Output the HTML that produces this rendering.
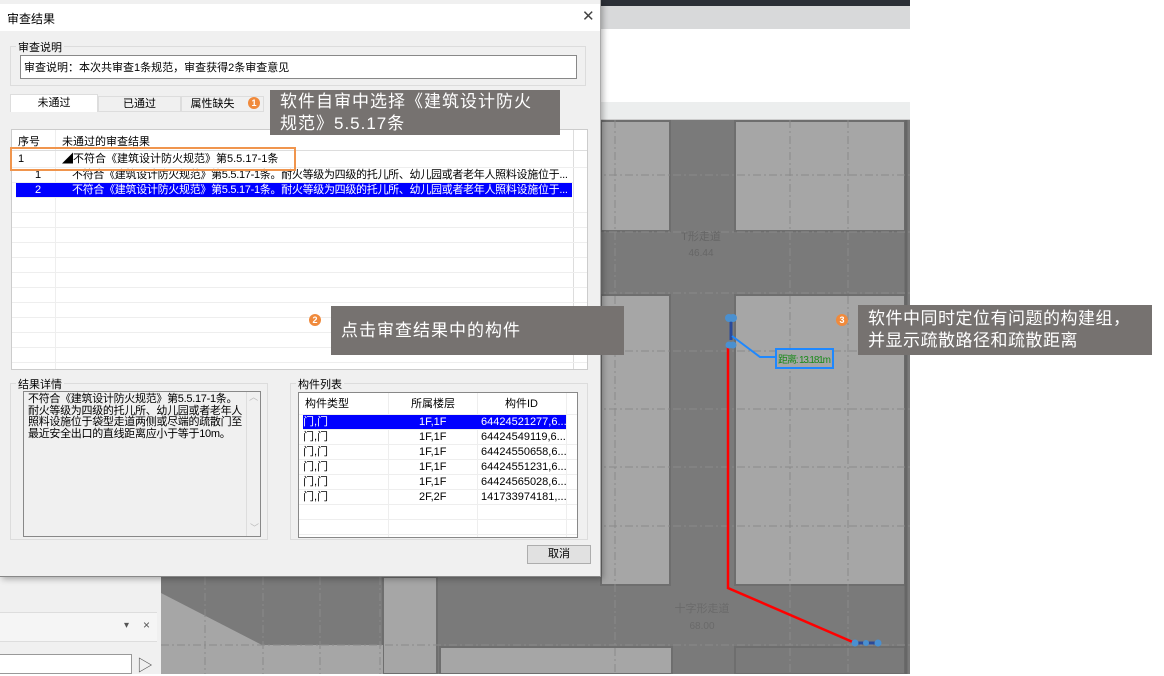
<!DOCTYPE html>
<html><head><meta charset="utf-8"><style>
*{margin:0;padding:0;box-sizing:border-box}
body{width:1164px;height:674px;position:relative;overflow:hidden;background:#fff;font-family:"Liberation Sans","Noto Sans CJK SC",sans-serif;font-size:11px;color:#000}
.a{position:absolute}
.ann{position:absolute;background:#767270;color:#fff;font-size:17px;line-height:22px;letter-spacing:1px;white-space:nowrap}
.dot{position:absolute;width:12px;height:12px;border-radius:50%;background:#f08a3c;color:#fff;font-size:9px;line-height:12px;text-align:center;font-weight:bold}
.row{position:absolute;left:0;right:0;height:15px;border-bottom:1px solid #eee;line-height:15px;white-space:nowrap}
</style></head><body>
<div class="a" style="left:0;top:0;width:910px;height:6px;background:#2b2f36"></div>
<div class="a" style="left:601px;top:6px;width:309px;height:23px;background:#d8d9da"></div>
<div class="a" style="left:601px;top:29px;width:309px;height:73px;background:#fff"></div>
<div class="a" style="left:601px;top:102px;width:309px;height:18px;background:#eceeee;border-bottom:1px solid #ccc"></div>
<svg class="a" style="left:0;top:0" width="1164" height="674">
<rect x="161" y="120" width="749" height="554" fill="#7a7a7a"/>
<g fill="#a6a6a6" stroke="#6e6e6e" stroke-width="2">
<rect x="601" y="121" width="69" height="110"/>
<rect x="735" y="121" width="170" height="110"/>
<rect x="601" y="295" width="69" height="290"/>
<rect x="735" y="295" width="170" height="290"/>
<rect x="383" y="577" width="54" height="97"/>
<rect x="440" y="647" width="232" height="27"/>
<rect x="735" y="647" width="170" height="27" fill="#7a7a7a"/>
</g>
<polygon points="161,593 262,645 383,645 383,674 161,674" fill="#a6a6a6"/>
<line x1="906" y1="120" x2="906" y2="674" stroke="#666" stroke-width="3"/>
<g stroke="#8a8a8a" stroke-dasharray="8,3,2,3" stroke-width="1">
<line x1="161" y1="175" x2="910" y2="175"/><line x1="161" y1="232" x2="910" y2="232"/><line x1="161" y1="293" x2="910" y2="293"/><line x1="161" y1="351" x2="910" y2="351"/><line x1="161" y1="409" x2="910" y2="409"/><line x1="161" y1="467" x2="910" y2="467"/><line x1="161" y1="526" x2="910" y2="526"/><line x1="161" y1="645" x2="910" y2="645"/>
<line x1="615" y1="120" x2="615" y2="674"/><line x1="790" y1="120" x2="790" y2="674"/><line x1="848" y1="120" x2="848" y2="674"/><line x1="205" y1="577" x2="205" y2="674"/><line x1="263" y1="577" x2="263" y2="674"/><line x1="320" y1="577" x2="320" y2="674"/><line x1="380" y1="577" x2="380" y2="674"/>
</g>
<text x="701" y="240" fill="#666" font-size="11" text-anchor="middle">T形走道</text>
<text x="701" y="256" fill="#666" font-size="10" text-anchor="middle">46.44</text>
<text x="702" y="612" fill="#6a6a6a" font-size="11" text-anchor="middle">十字形走道</text>
<text x="702" y="629" fill="#6a6a6a" font-size="10" text-anchor="middle">68.00</text>
<polyline points="728,345 728,588 855,643" fill="none" stroke="#f00" stroke-width="2.5"/>
<line x1="731" y1="320" x2="731" y2="340" stroke="#2a4a9a" stroke-width="3"/>
<circle cx="729" cy="318" r="4" fill="#4a90d0"/><circle cx="733" cy="318" r="4" fill="#4a90d0"/>
<circle cx="729" cy="345" r="3.5" fill="#4a90d0"/><circle cx="733" cy="345" r="3.5" fill="#4a90d0"/>
<polyline points="732,336 760,357 776,357" fill="none" stroke="#1e88ff" stroke-width="2"/>
<rect x="776" y="349" width="57" height="19" fill="#a6a6a6" stroke="#1e88ff" stroke-width="2"/>
<text x="778" y="363" fill="#1a8a1a" font-size="10" textLength="53">距离: 13.181m</text>
<line x1="855" y1="643" x2="878" y2="643" stroke="#2a4a9a" stroke-width="3"/>
<circle cx="855" cy="643" r="3.5" fill="#4a90d0"/><circle cx="866" cy="643" r="3" fill="#4a90d0"/><circle cx="878" cy="643" r="3.5" fill="#4a90d0"/>
</svg>
<div class="a" style="left:0;top:577px;width:161px;height:97px;background:#f0f0f0"></div>
<div class="a" style="left:0;top:612px;width:157px;height:30px;background:#f5f5f5;border-top:1px solid #ddd;border-bottom:1px solid #ddd"></div>
<div class="a" style="left:124px;top:620px;font-size:10px;color:#555">▾</div>
<div class="a" style="left:143px;top:618px;font-size:12px;color:#555">×</div>
<div class="a" style="left:0;top:654px;width:132px;height:20px;background:#fff;border:1px solid #999;border-left:none"></div>
<div class="a" style="left:137px;top:652px;font-size:16px;color:#555">▷</div>
<div class="a" style="left:0;top:0;width:601px;height:577px;background:#f0f0f0;border-right:1px solid #aaa;border-bottom:1px solid #888;box-shadow:2px 2px 6px rgba(0,0,0,.3)">
 <div class="a" style="left:0;top:4px;width:600px;height:27px;background:#fff"></div>
 <div class="a" style="left:7px;top:10px;font-size:12px">审查结果</div>
 <div class="a" style="left:582px;top:7px;font-size:15px;color:#444">✕</div>
 <div class="a" style="left:10px;top:46px;width:576px;height:40px;border:1px solid #dcdcdc"></div>
 <div class="a" style="left:16px;top:39px;background:#f0f0f0;padding:0 2px;font-size:11px">审查说明</div>
 <div class="a" style="left:20px;top:55px;width:557px;height:24px;background:#fff;border:1px solid #888;padding:3px 3px;font-size:11px">审查说明：本次共审查1条规范，审查获得2条审查意见</div>
 <div class="a" style="left:10px;top:94px;width:88px;height:18px;background:#fff;border:1px solid #ddd;border-bottom:none;text-align:center;line-height:17px">未通过</div>
 <div class="a" style="left:98px;top:96px;width:83px;height:16px;border:1px solid #ddd;text-align:center;line-height:15px">已通过</div>
 <div class="a" style="left:181px;top:96px;width:83px;height:16px;border:1px solid #ddd;text-align:center;line-height:15px;padding-right:20px">属性缺失</div>
 <div class="dot" style="left:248px;top:97px">1</div>
 <div class="a" style="left:11px;top:129px;width:577px;height:241px;background:#fff;border:1px solid #ccc;overflow:hidden">
  <div class="a" style="left:43px;top:0;width:1px;height:241px;background:#eee"></div>
  <div class="a" style="left:561px;top:0;width:1px;height:241px;background:#ddd"></div>
  <div class="row" style="top:3px;height:18px;line-height:18px;border-bottom:1px solid #ddd"><span class="a" style="left:6px">序号</span><span class="a" style="left:50px">未通过的审查结果</span></div>
  <div class="row" style="top:21px;height:17px;line-height:17px"><span class="a" style="left:6px">1</span><span class="a" style="left:50px">◢不符合《建筑设计防火规范》第5.5.17-1条</span></div>
  <div class="row" style="top:38px;overflow:hidden;right:14px"><span class="a" style="left:23px">1</span><span class="a" style="left:60px;letter-spacing:-0.3px">不符合《建筑设计防火规范》第5.5.17-1条。耐火等级为四级的托儿所、幼儿园或者老年人照料设施位于...</span></div>
  <div class="row" style="top:53px;left:4px;right:15px;background:#0000ff;color:#fff;overflow:hidden"><span class="a" style="left:19px">2</span><span class="a" style="left:56px;letter-spacing:-0.3px">不符合《建筑设计防火规范》第5.5.17-1条。耐火等级为四级的托儿所、幼儿园或者老年人照料设施位于...</span></div>
  <div class="row" style="top:68px"></div><div class="row" style="top:83px"></div><div class="row" style="top:98px"></div><div class="row" style="top:113px"></div><div class="row" style="top:128px"></div><div class="row" style="top:143px"></div><div class="row" style="top:158px"></div><div class="row" style="top:173px"></div><div class="row" style="top:188px"></div><div class="row" style="top:203px"></div><div class="row" style="top:218px"></div>
 </div>
 <div class="a" style="left:10px;top:383px;width:258px;height:157px;border:1px solid #dcdcdc"></div>
 <div class="a" style="left:16px;top:376px;background:#f0f0f0;padding:0 2px">结果详情</div>
 <div class="a" style="left:23px;top:391px;width:238px;height:146px;background:#f0f0f0;border:1px solid #888;padding:2px 4px;font-size:11px;line-height:11.5px;letter-spacing:-0.3px;white-space:nowrap">不符合《建筑设计防火规范》第5.5.17-1条。<br>耐火等级为四级的托儿所、幼儿园或者老年人<br>照料设施位于袋型走道两侧或尽端的疏散门至<br>最近安全出口的直线距离应小于等于10m。
  <div class="a" style="right:0;top:0;width:14px;height:144px;border-left:1px solid #ddd;color:#bbb;font-size:9px;text-align:center;background:#f0f0f0">︿<div class="a" style="bottom:2px;left:3px">﹀</div></div>
 </div>
 <div class="a" style="left:290px;top:383px;width:298px;height:157px;border:1px solid #dcdcdc"></div>
 <div class="a" style="left:296px;top:376px;background:#f0f0f0;padding:0 2px">构件列表</div>
 <div class="a" style="left:298px;top:392px;width:280px;height:146px;background:#fff;border:1px solid #888;overflow:hidden">
  <div class="a" style="left:89px;top:0;width:1px;height:146px;background:#eee"></div>
  <div class="a" style="left:178px;top:0;width:1px;height:146px;background:#eee"></div>
  <div class="a" style="left:267px;top:0;width:1px;height:146px;background:#eee"></div>
  <div class="row" style="top:0;height:22px;line-height:22px"><span class="a" style="left:6px">构件类型</span><span class="a" style="left:112px">所属楼层</span><span class="a" style="left:206px">构件ID</span></div>
  <div class="row" style="top:22px;left:4px;width:263px;background:#0000ff;color:#fff"><span class="a" style="left:0">门,门</span><span class="a" style="left:116px">1F,1F</span><span class="a" style="left:178px">64424521277,6...</span></div>
  <div class="row" style="top:37px"><span class="a" style="left:4px">门,门</span><span class="a" style="left:120px">1F,1F</span><span class="a" style="left:182px">64424549119,6...</span></div>
  <div class="row" style="top:52px"><span class="a" style="left:4px">门,门</span><span class="a" style="left:120px">1F,1F</span><span class="a" style="left:182px">64424550658,6...</span></div>
  <div class="row" style="top:67px"><span class="a" style="left:4px">门,门</span><span class="a" style="left:120px">1F,1F</span><span class="a" style="left:182px">64424551231,6...</span></div>
  <div class="row" style="top:82px"><span class="a" style="left:4px">门,门</span><span class="a" style="left:120px">1F,1F</span><span class="a" style="left:182px">64424565028,6...</span></div>
  <div class="row" style="top:97px"><span class="a" style="left:4px">门,门</span><span class="a" style="left:120px">2F,2F</span><span class="a" style="left:182px">141733974181,...</span></div>
  <div class="row" style="top:112px"></div><div class="row" style="top:127px"></div>
 </div>
 <div class="a" style="left:527px;top:545px;width:64px;height:19px;background:#e1e1e1;border:1px solid #adadad;text-align:center;line-height:17px">取消</div>
</div>
<div class="ann" style="left:270px;top:90px;width:290px;height:45px;padding:1px 10px">软件自审中选择《建筑设计防火<br>规范》5.5.17条</div>
<div class="a" style="left:10px;top:147px;width:286px;height:24px;border:2px solid #f0954d"></div>
<div class="dot" style="left:309px;top:314px">2</div>
<div class="ann" style="left:331px;top:306px;width:293px;height:49px;padding:14px 10px">点击审查结果中的构件</div>
<div class="dot" style="left:836px;top:314px">3</div>
<div class="ann" style="left:858px;top:305px;width:294px;height:50px;padding:3px 10px;letter-spacing:0.5px">软件中同时定位有问题的构建组，<br>并显示疏散路径和疏散距离</div>
</body></html>
